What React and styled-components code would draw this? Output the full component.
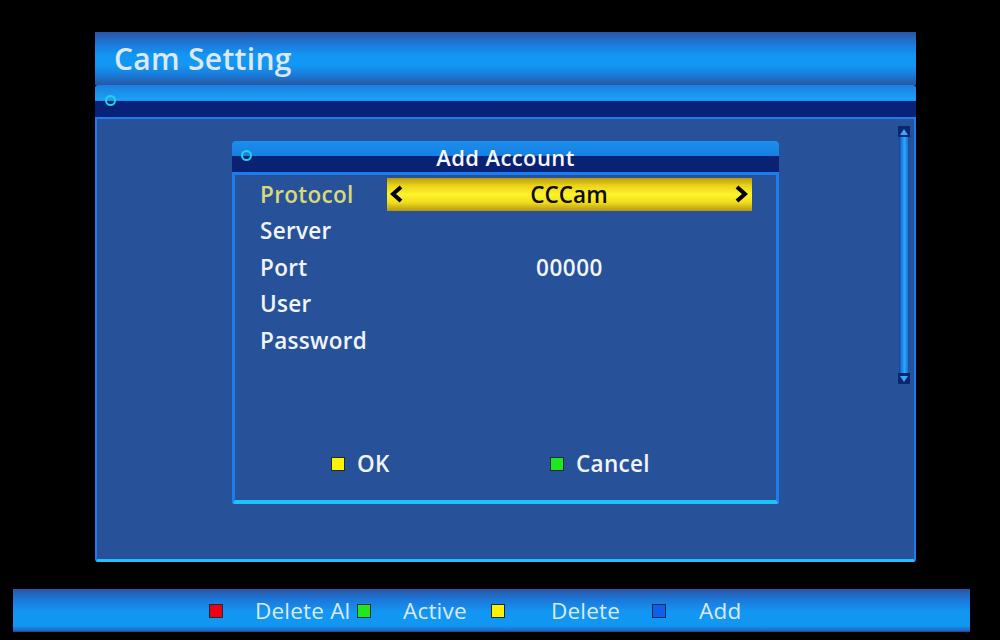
import React from "react";
import styled, { createGlobalStyle } from "styled-components";

const Global = createGlobalStyle`
  html, body { margin: 0; padding: 0; background: #000; }
  body { width: 1000px; height: 640px; overflow: hidden; font-family: "Open Sans", "Noto Sans", sans-serif; }
`;

const Screen = styled.div`
  width: 1000px;
  height: 640px;
  background: #000;
  display: flex;
  flex-direction: column;
  padding-top: 32px;
  box-sizing: border-box;
`;

const Window = styled.div`
  margin-left: 95px;
  width: 821px;
  display: flex;
  flex-direction: column;
`;

const Header = styled.div`
  height: 53px;
  display: flex;
  align-items: center;
  padding-left: 19px;
  background: linear-gradient(180deg, #2b55a4 0%, #1d78d8 22%, #1198f4 45%, #1298f4 62%, #1a7ad8 82%, #2a55a2 100%);
  color: #dfe7f0;
  font-size: 30px;
  font-weight: 600;
  letter-spacing: 0.3px;
`;

const SubBar = styled.div`
  height: 32px;
  position: relative;
  background: linear-gradient(180deg, #1b7fe0 0%, #1ba0f6 45%, #1890ee 50%, #072278 50%, #072278 100%);
  border-radius: 3px 3px 0 0;
`;

const Ring = styled.span`
  position: absolute;
  left: ${(p) => p.$x}px;
  top: ${(p) => p.$y}px;
  width: 7px;
  height: 7px;
  border: 2px solid #25d2e6;
  border-radius: 50%;
`;

const Panel = styled.div`
  height: 445px;
  box-sizing: border-box;
  background: #27529a;
  border: 2px solid #1b7df0;
  border-bottom: 3px solid #1fc2fa;
  border-radius: 0 0 3px 3px;
  display: flex;
  align-items: flex-start;
  padding: 7px 4px 0 135px;
`;

const Dialog = styled.div`
  margin-top: 15px;
  width: 547px;
  display: flex;
  flex-direction: column;
`;

const DialogHead = styled.div`
  position: relative;
  height: 31px;
  border-radius: 4px 4px 0 0;
  background: linear-gradient(180deg, #1b8eee 0%, #1680e2 48%, #0a2274 48%, #0a2274 100%);
  display: flex;
  align-items: center;
  justify-content: center;
  color: #f6f8fb;
  font-size: 22px;
  font-weight: 600;
  letter-spacing: 0.4px;
  padding-top: 1px;
  box-sizing: border-box;
`;

const DialogBody = styled.div`
  height: 332px;
  box-sizing: border-box;
  border: 3px solid #1b7df0;
  border-bottom: 4px solid #1fc2fa;
  border-radius: 0 0 3px 3px;
  background: #27529a;
  display: flex;
  flex-direction: column;
  padding: 1px 0 0 25px;
`;

const Row = styled.div`
  height: 36.5px;
  display: grid;
  grid-template-columns: 127px 365px;
  align-items: center;
`;

const Label = styled.div`
  font-size: 22.5px;
  font-weight: 600;
  letter-spacing: 0.3px;
  color: ${(p) => (p.$active ? "#d9d97a" : "#f2f5f8")};
`;

const Value = styled.div`
  font-size: 22.5px;
  font-weight: 600;
  letter-spacing: 0.5px;
  color: #f2f5f8;
  text-align: center;
`;

const Selector = styled.div`
  height: 33px;
  box-sizing: border-box;
  display: flex;
  align-items: center;
  justify-content: space-between;
  padding: 0 4px 0 3px;
  background: linear-gradient(180deg, #b89a10 0%, #e8d21a 22%, #fff32a 50%, #efdc1e 75%, #b39512 100%);
  color: #0c0c0c;
  font-size: 22.5px;
  font-weight: 600;
`;

const Chevron = styled.svg`
  width: 14px;
  height: 18px;
`;

const Spacer = styled.div`
  flex: 1;
`;

const Buttons = styled.div`
  display: grid;
  grid-template-columns: 219px 219px;
  padding-left: 71px;
  margin-bottom: 21px;
`;

const Btn = styled.div`
  display: flex;
  align-items: center;
  gap: 12px;
  color: #f2f5f8;
  font-size: 22.5px;
  font-weight: 600;
  letter-spacing: 0.3px;
`;

const Key = styled.span`
  width: 12px;
  height: 12px;
  flex: none;
  background: ${(p) => p.$c};
  border: 1px solid #1b2a40;
  margin-left: ${(p) => p.$shift || 0}px;
`;

const Scroll = styled.div`
  margin-left: auto;
  width: 12px;
  height: 258px;
  display: flex;
  flex-direction: column;
`;

const Cap = styled.div`
  height: 11px;
  background: #0b2670;
  display: flex;
  align-items: center;
  justify-content: center;
`;

const Track = styled.div`
  flex: 1;
  margin: 0 1px;
  background: linear-gradient(90deg, #0d3c94 0%, #1a72d8 20%, #2aa6fa 55%, #1a7ae0 85%, #0d3c94 100%);
`;

const Footer = styled.div`
  margin-top: 27px;
  margin-left: 13px;
  width: 957px;
  height: 43px;
  box-sizing: border-box;
  background: linear-gradient(180deg, #2a55a2 0%, #1c78da 25%, #1198f4 55%, #1296f2 85%, #1a6cc8 96%, #203e80 100%);
  display: grid;
  grid-template-columns: repeat(4, 148px);
  align-items: center;
  padding-left: 196px;
`;

const Item = styled.div`
  display: flex;
  align-items: center;
  white-space: nowrap;
  color: #dfe8f2;
  font-size: 22.5px;
  font-weight: 400;
  letter-spacing: 0.2px;
`;

const ItemText = styled.span`
  margin-left: ${(p) => p.$gap}px;
`;

const Left = () => (
  <Chevron viewBox="0 0 14 18">
    <path d="M11 2 L3 9 L11 16" fill="none" stroke="#000" strokeWidth="4" strokeLinejoin="miter" />
  </Chevron>
);
const Right = () => (
  <Chevron viewBox="0 0 14 18">
    <path d="M3 2 L11 9 L3 16" fill="none" stroke="#000" strokeWidth="4" strokeLinejoin="miter" />
  </Chevron>
);

const legend = [
  { c: "#f00010", t: "Delete Al", shift: 0, gap: 32 },
  { c: "#1ee81e", t: "Active", shift: 0, gap: 32 },
  { c: "#fff200", t: "Delete", shift: -14, gap: 46 },
  { c: "#0e5ef0", t: "Add", shift: -1, gap: 33 },
];

export default function App() {
  return (
    <>
      <Global />
      <Screen>
        <Window>
          <Header>Cam Setting</Header>
          <SubBar>
            <Ring $x={10} $y={10} />
          </SubBar>
          <Panel>
            <Dialog>
              <DialogHead>
                <Ring $x={9} $y={9} />
                Add Account
              </DialogHead>
              <DialogBody>
                <Row>
                  <Label $active>Protocol</Label>
                  <Selector>
                    <Left />
                    <span>CCCam</span>
                    <Right />
                  </Selector>
                </Row>
                <Row>
                  <Label>Server</Label>
                  <Value />
                </Row>
                <Row>
                  <Label>Port</Label>
                  <Value>00000</Value>
                </Row>
                <Row>
                  <Label>User</Label>
                  <Value />
                </Row>
                <Row>
                  <Label>Password</Label>
                  <Value />
                </Row>
                <Spacer />
                <Buttons>
                  <Btn>
                    <Key $c="#fff200" />
                    OK
                  </Btn>
                  <Btn>
                    <Key $c="#1ee81e" />
                    Cancel
                  </Btn>
                </Buttons>
              </DialogBody>
            </Dialog>
            <Scroll>
              <Cap>
                <svg width="8" height="6" viewBox="0 0 8 6"><path d="M4 0 L8 6 L0 6 Z" fill="#3aa8f8" /></svg>
              </Cap>
              <Track />
              <Cap>
                <svg width="8" height="6" viewBox="0 0 8 6"><path d="M0 0 L8 0 L4 6 Z" fill="#3aa8f8" /></svg>
              </Cap>
            </Scroll>
          </Panel>
        </Window>
        <Footer>
          {legend.map((l) => (
            <Item key={l.t}>
              <Key $c={l.c} $shift={l.shift} />
              <ItemText $gap={l.gap}>{l.t}</ItemText>
            </Item>
          ))}
        </Footer>
      </Screen>
    </>
  );
}
